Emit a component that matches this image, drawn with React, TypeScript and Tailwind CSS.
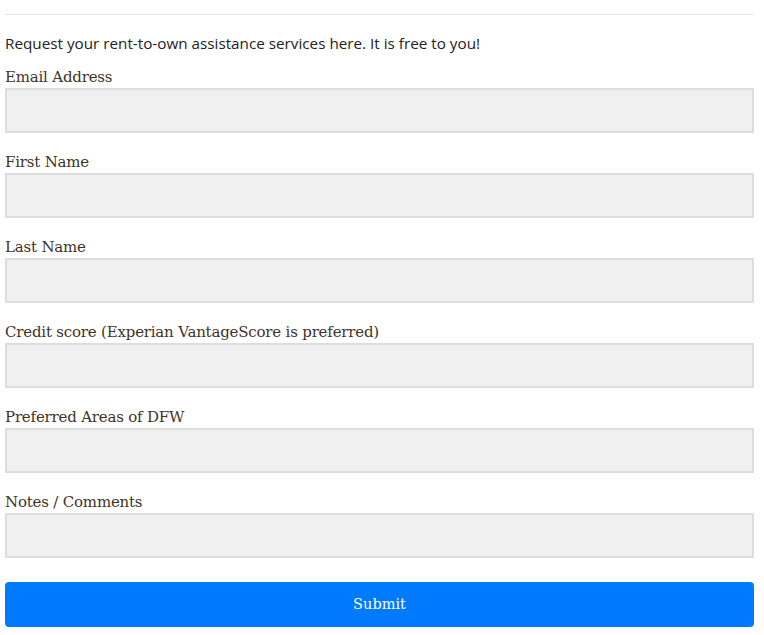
import React from "react";

const fields = [
  "Email Address",
  "First Name",
  "Last Name",
  "Credit score (Experian VantageScore is preferred)",
  "Preferred Areas of DFW",
  "Notes / Comments",
];

export default function App() {
  return (
    <div className="w-[764px] h-[635px] bg-white px-[5px] overflow-hidden">
      <div className="w-[749px]">
        <div className="pt-[14px]">
          <div className="h-px bg-[#e6e6e6]" />
        </div>
        <p
          className="mt-[18px] text-[15.25px] leading-[20px] text-[#222222]"
          style={{ fontFamily: '"Open Sans", "DejaVu Sans", sans-serif' }}
        >
          Request your rent-to-own assistance services here. It is free to you!
        </p>
        <form className="flex flex-col">
          {fields.map((f, i) => (
            <div key={f} className={i === 0 ? "mt-[15px]" : "mt-[20px]"}>
              <label
                className="block h-[20px] text-[15px] leading-[18px] tracking-[-0.2px] text-[#3f3326]"
                style={{ fontFamily: '"DejaVu Serif", serif' }}
              >
                {f}
              </label>
              <div className="h-[45px] border-2 border-[#dddddd] bg-[#f0f0f0]" />
            </div>
          ))}
          <button
            type="button"
            className="mt-[24px] h-[45px] rounded-[4px] bg-[#007bff] text-white text-[14.5px]"
            style={{ fontFamily: '"DejaVu Serif", serif' }}
          >
            Submit
          </button>
        </form>
      </div>
    </div>
  );
}
